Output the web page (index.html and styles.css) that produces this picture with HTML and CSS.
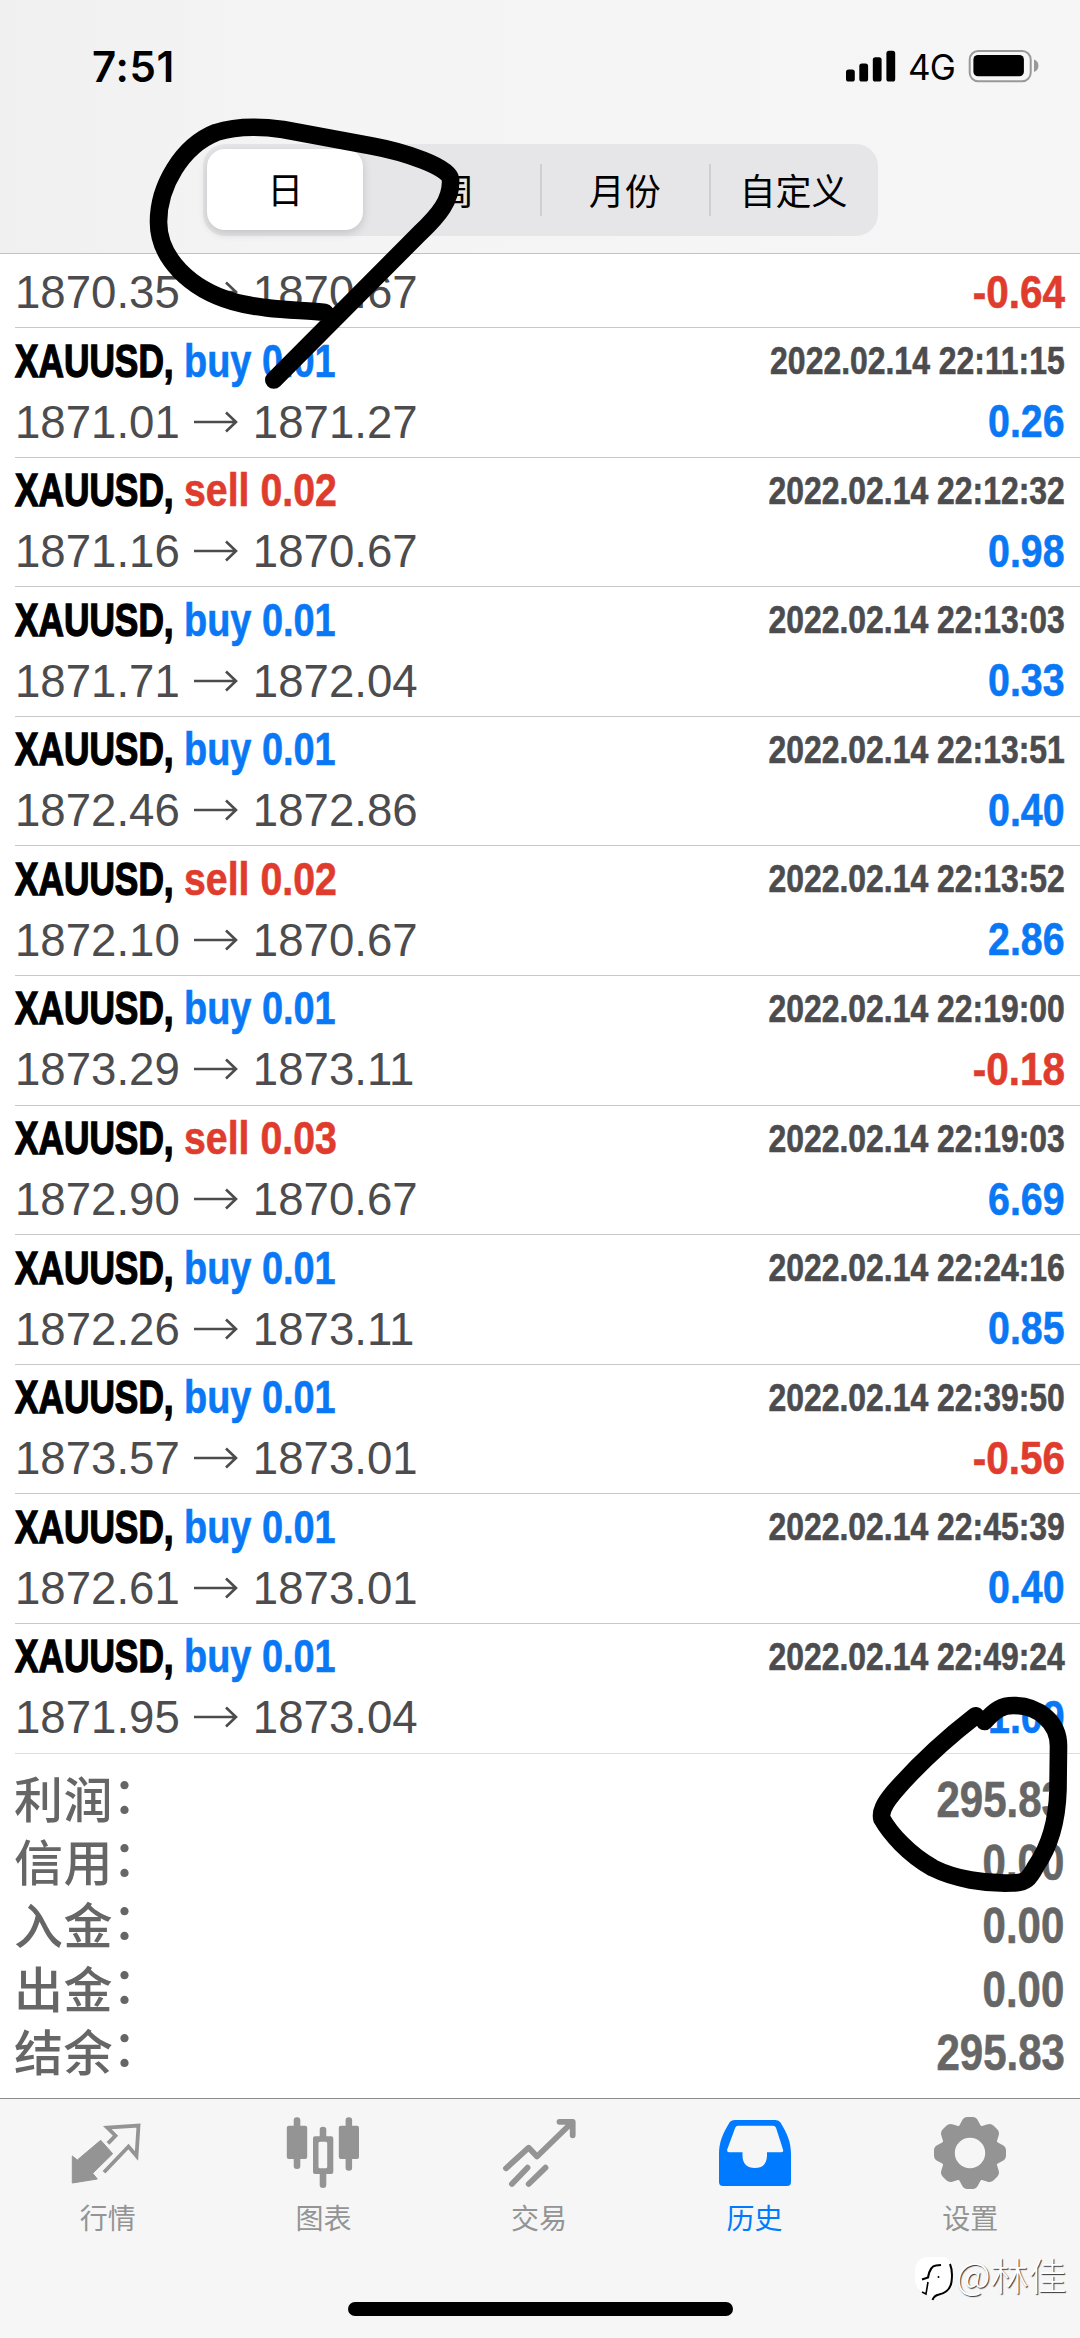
FILE: index.html
```html
<!DOCTYPE html>
<html lang="zh-CN">
<head>
<meta charset="utf-8">
<title>历史</title>
<link rel="stylesheet" href="styles.css">
</head>
<body>
<div class="screen">
  <header class="header">
    <div class="status">
      <span class="time">7:51</span>
      <div class="status-right">
        <svg class="signal" width="50" height="32" viewBox="0 0 50 32"><rect x="0" y="19.5" width="8.8" height="12" rx="2.6"/><rect x="13.3" y="13.5" width="8.8" height="18" rx="2.6"/><rect x="26.8" y="7.2" width="8.8" height="24.3" rx="2.6"/><rect x="40.4" y="0.8" width="8.8" height="30.7" rx="2.6"/></svg>
        <span class="net">4G</span>
        <svg class="battery" width="72" height="34" viewBox="0 0 72 34"><rect x="1.7" y="2" width="61" height="30.3" rx="8.5" fill="none" stroke="#999" stroke-width="2"/><rect x="5.4" y="6" width="50.5" height="21.3" rx="4.5"/><path d="M66 10.5Q70.4 12 70.4 16.7Q70.4 21.5 66 23Z" fill="#999"/></svg>
      </div>
    </div>
    <nav class="segments">
      <span class="segment active">日</span>
      <span class="segment">周</span>
      <span class="segment divided">月份</span>
      <span class="segment divided">自定义</span>
    </nav>
  </header>

  <main class="history">
    <div class="deal partial"><div class="line"><span class="price">1870.35<svg class="arrow" viewBox="0 0 46 24"><path d="M1 12H43M33 2.5L43 12L33 21.5"/></svg>1870.67</span><span class="result loss">-0.64</span></div></div>
    <div class="deal"><div class="line head"><span class="symbol">XAUUSD,</span><span class="side buy">buy 0.01</span><span class="date">2022.02.14 22:11:15</span></div><div class="line"><span class="price">1871.01<svg class="arrow" viewBox="0 0 46 24"><path d="M1 12H43M33 2.5L43 12L33 21.5"/></svg>1871.27</span><span class="result">0.26</span></div></div>
    <div class="deal"><div class="line head"><span class="symbol">XAUUSD,</span><span class="side sell">sell 0.02</span><span class="date">2022.02.14 22:12:32</span></div><div class="line"><span class="price">1871.16<svg class="arrow" viewBox="0 0 46 24"><path d="M1 12H43M33 2.5L43 12L33 21.5"/></svg>1870.67</span><span class="result">0.98</span></div></div>
    <div class="deal"><div class="line head"><span class="symbol">XAUUSD,</span><span class="side buy">buy 0.01</span><span class="date">2022.02.14 22:13:03</span></div><div class="line"><span class="price">1871.71<svg class="arrow" viewBox="0 0 46 24"><path d="M1 12H43M33 2.5L43 12L33 21.5"/></svg>1872.04</span><span class="result">0.33</span></div></div>
    <div class="deal"><div class="line head"><span class="symbol">XAUUSD,</span><span class="side buy">buy 0.01</span><span class="date">2022.02.14 22:13:51</span></div><div class="line"><span class="price">1872.46<svg class="arrow" viewBox="0 0 46 24"><path d="M1 12H43M33 2.5L43 12L33 21.5"/></svg>1872.86</span><span class="result">0.40</span></div></div>
    <div class="deal"><div class="line head"><span class="symbol">XAUUSD,</span><span class="side sell">sell 0.02</span><span class="date">2022.02.14 22:13:52</span></div><div class="line"><span class="price">1872.10<svg class="arrow" viewBox="0 0 46 24"><path d="M1 12H43M33 2.5L43 12L33 21.5"/></svg>1870.67</span><span class="result">2.86</span></div></div>
    <div class="deal"><div class="line head"><span class="symbol">XAUUSD,</span><span class="side buy">buy 0.01</span><span class="date">2022.02.14 22:19:00</span></div><div class="line"><span class="price">1873.29<svg class="arrow" viewBox="0 0 46 24"><path d="M1 12H43M33 2.5L43 12L33 21.5"/></svg>1873.11</span><span class="result loss">-0.18</span></div></div>
    <div class="deal"><div class="line head"><span class="symbol">XAUUSD,</span><span class="side sell">sell 0.03</span><span class="date">2022.02.14 22:19:03</span></div><div class="line"><span class="price">1872.90<svg class="arrow" viewBox="0 0 46 24"><path d="M1 12H43M33 2.5L43 12L33 21.5"/></svg>1870.67</span><span class="result">6.69</span></div></div>
    <div class="deal"><div class="line head"><span class="symbol">XAUUSD,</span><span class="side buy">buy 0.01</span><span class="date">2022.02.14 22:24:16</span></div><div class="line"><span class="price">1872.26<svg class="arrow" viewBox="0 0 46 24"><path d="M1 12H43M33 2.5L43 12L33 21.5"/></svg>1873.11</span><span class="result">0.85</span></div></div>
    <div class="deal"><div class="line head"><span class="symbol">XAUUSD,</span><span class="side buy">buy 0.01</span><span class="date">2022.02.14 22:39:50</span></div><div class="line"><span class="price">1873.57<svg class="arrow" viewBox="0 0 46 24"><path d="M1 12H43M33 2.5L43 12L33 21.5"/></svg>1873.01</span><span class="result loss">-0.56</span></div></div>
    <div class="deal"><div class="line head"><span class="symbol">XAUUSD,</span><span class="side buy">buy 0.01</span><span class="date">2022.02.14 22:45:39</span></div><div class="line"><span class="price">1872.61<svg class="arrow" viewBox="0 0 46 24"><path d="M1 12H43M33 2.5L43 12L33 21.5"/></svg>1873.01</span><span class="result">0.40</span></div></div>
    <div class="deal last"><div class="line head"><span class="symbol">XAUUSD,</span><span class="side buy">buy 0.01</span><span class="date">2022.02.14 22:49:24</span></div><div class="line"><span class="price">1871.95<svg class="arrow" viewBox="0 0 46 24"><path d="M1 12H43M33 2.5L43 12L33 21.5"/></svg>1873.04</span><span class="result">1.09</span></div></div>

    <dl class="summary">
      <div class="total"><dt>利润<span class="colon">：</span></dt><dd>295.83</dd></div>
      <div class="total"><dt>信用<span class="colon">：</span></dt><dd>0.00</dd></div>
      <div class="total"><dt>入金<span class="colon">：</span></dt><dd>0.00</dd></div>
      <div class="total"><dt>出金<span class="colon">：</span></dt><dd>0.00</dd></div>
      <div class="total"><dt>结余<span class="colon">：</span></dt><dd>295.83</dd></div>
    </dl>
  </main>

  <footer class="tabbar">
    <div class="tabs">
      <div class="tab">
        <svg class="icon" viewBox="1.5 0 74 76"><path d="M2.8 40L7.8 44L31.2 24.3L43.2 37.7L23.2 57.3L27.8 63L2.8 67Z" fill="currentColor" stroke="currentColor" stroke-width="1" stroke-linejoin="round"/><path d="M38.5 27.3L46 19.7L37.8 11.6L69 9.5L67 40L59 30.5L34.5 56.3" fill="none" stroke="currentColor" stroke-width="3.8"/></svg>
        <span>行情</span>
      </div>
      <div class="tab">
        <svg class="icon" viewBox="0 0 74 76" fill="currentColor"><rect x=".8" y="9.7" width="20.4" height="33.3" rx="2"/><rect x="7.7" y="1.3" width="6.6" height="51.7" rx="3"/><path fill-rule="evenodd" d="M29 20.3H45.3Q47.3 20.3 47.3 22.3V56Q47.3 58 45.3 58H29Q27 58 27 56V22.3Q27 20.3 29 20.3ZM34 25.7Q32.5 25.7 32.5 27.2V50.8Q32.5 52.3 34 52.3H39.7Q41.2 52.3 41.2 50.8V27.2Q41.2 25.7 39.7 25.7Z"/><path d="M33.7 21V13.5Q33.7 10.7 37 10.7Q40.3 10.7 40.3 13.5V21ZM33.7 57V69Q33.7 72 37 72Q40.3 72 40.3 69V57Z"/><rect x="52.8" y="9.7" width="20.2" height="33.3" rx="2"/><rect x="59.6" y="1.3" width="6.5" height="53.5" rx="3"/></svg>
        <span>图表</span>
      </div>
      <div class="tab">
        <svg class="icon" viewBox="0 0 74 76" fill="none" stroke="currentColor" stroke-width="5.8" stroke-linecap="round" stroke-linejoin="round"><path d="M4 52.3L26.7 31.7L35 40.5L70.5 6M57.5 5.8H70.7V19.3"/><path d="M9.9 68L25.5 51.7M26.7 68L43.5 51.7"/></svg>
        <span>交易</span>
      </div>
      <div class="tab current">
        <svg class="icon" viewBox="0 0 74 76" fill="currentColor"><path fill-rule="evenodd" d="M17 4H57.5Q61 4 62.5 6.5C69 17 73 26 73 38V66Q73 70 69 70H5Q1 70 1 66V38C1 26 5 17 11.5 6.5Q13 4 17 4ZM20 9.7Q18 9.7 17.2 11.7L9.2 33.5Q8.6 36.3 11 36.3H24.5V40Q25 52 36.8 52Q48.5 52 49 40V36.3H63Q66 36.3 65 33.5L58 11.7Q57.3 9.7 55 9.7Z"/></svg>
        <span>历史</span>
      </div>
      <div class="tab">
        <svg class="icon" viewBox="0 0 74 76" fill="currentColor"><defs><path id="tooth" d="M24.5 13L28.8 5Q30.5 1 34.5 1H39.5Q43.5 1 45.2 5L49.5 13Z"/></defs><circle cx="37" cy="37" r="22.2" fill="none" stroke="currentColor" stroke-width="14"/><use href="#tooth"/><use href="#tooth" transform="rotate(45 37 37)"/><use href="#tooth" transform="rotate(90 37 37)"/><use href="#tooth" transform="rotate(135 37 37)"/><use href="#tooth" transform="rotate(180 37 37)"/><use href="#tooth" transform="rotate(225 37 37)"/><use href="#tooth" transform="rotate(270 37 37)"/><use href="#tooth" transform="rotate(315 37 37)"/></svg>
        <span>设置</span>
      </div>
    </div>
    <div class="home"></div>
  </footer>

  <div class="watermark">
    <svg width="42" height="48" viewBox="0 0 42 48"><path d="M12 1H30Q38 2 39 14V25Q38 38 25 39.5Q20 40 19 44Q16 38 11 37Q2 34 1 24V14Q2 3 12 1Z" fill="#fff"/><path d="M36 8Q39 15 37.5 26Q36 36 25 38.5Q20 39.5 18.5 44" fill="none" stroke="#000" stroke-width="2"/><path d="M8 23.5L14 21.5Q16 10 22 9.5L27 9" fill="none" stroke="#000" stroke-width="2.2"/><path d="M14 26L12 38L8 36" fill="none" stroke="#000" stroke-width="1.6"/><circle cx="24.5" cy="21" r="1"/></svg>
    <span>@林佳</span>
  </div>

  <svg class="ink" viewBox="0 0 1080 2338">
    <path d="M325 312.5C305 309.5 265 311 233 301.5C190 289 158.5 258 158.5 222C158.5 186 182 146 216 132.5C236 126 262 126.5 283 129.5L372 146C405 152 449 167 450.5 179C452 200 438 216 420 233L273.8 380"/>
    <path d="M984.5 1721.5C996 1709 1002 1705.500 1013.5 1705.5C1038 1705.500 1058.5 1722 1058.5 1746L1058 1790C1057 1822 1050 1846 1036 1866C1029 1879 1026 1883 1012 1883C985 1884 955 1879 933 1868C908 1854 890 1833 882 1819C880 1812 884 1804 894 1792C920 1762 948 1737 975.6 1715.7"/>
  </svg>
</div>
</body>
</html>
```
FILE: styles.css
```css
* { box-sizing: border-box; }

body {
  margin: 0;
  background: #fff;
  font-family: "Liberation Sans", "Noto Sans CJK SC", sans-serif;
}

.screen {
  position: relative;
  display: flex;
  flex-direction: column;
  width: 1080px;
  height: 2338px;
  overflow: hidden;
  background: #fff;
}

.header {
  height: 254px;
  border-bottom: 1px solid #c2c2c4;
  background: linear-gradient(90deg, #f0f0f0, #f5f4f4 25%, #f6f6f6);
}

.status {
  display: flex;
  justify-content: space-between;
  align-items: center;
  height: 144px;
  padding: 0 40px 12px 92px;
  font-family: Inter, sans-serif;
}

.time { font-size: 42px; font-weight: 600; letter-spacing: 0.6px; }
.status-right { display: flex; align-items: center; }
.signal { margin-right: 12px; }
.net { font-size: 35px; width: 60px; letter-spacing: -0.8px; padding-top: 2px; }

.segments {
  display: grid;
  grid-template-columns: repeat(4, 1fr);
  width: 675px;
  height: 92px;
  margin: 0 auto;
  border-radius: 22px;
  background: #e6e6e8;
}

.segment {
  display: flex;
  align-items: center;
  justify-content: center;
  font: 36px/1 "Noto Sans CJK SC", sans-serif;
  padding: 0 0 3px 1px;
}

.segment.active {
  margin: 5px 8px 6px 4px;
  border-radius: 18px;
  background: #fff;
  box-shadow: 0 3px 10px rgba(0, 0, 0, .16);
}

.divided {
  background: linear-gradient(#cfcfd2, #cfcfd2) left center / 2px 52px no-repeat;
}

.history { flex: 0 0 1844px; }

.deal {
  height: 129.6px;
  margin-left: 15px;
  padding: 0 15.5px 0 0;
  border-bottom: 1px solid #c8c8ca;
}

.partial { height: 74px; padding-top: 10.5px; }
.last { border-color: #dededf; }

.line {
  display: flex;
  align-items: center;
  justify-content: space-between;
  height: 55px;
  line-height: 55px;
}

.head { height: 66px; justify-content: flex-start; }

/* Condensed bold face, made by narrowing the regular-width one */
.symbol, .side, .date, .result, .total dd {
  font-weight: 700;
  white-space: nowrap;
  transform-origin: left center;
  -webkit-text-stroke: .6px currentColor;
}

.symbol { width: 169px; font-size: 46.5px; transform: scaleX(.758); -webkit-text-stroke-width: 1.4px; }
.side { width: 150px; font-size: 46.5px; }
.date { margin-left: auto; font-size: 38px; color: #4c4c4e; transform: scaleX(.84); padding-top: 1px; }
.price { font-size: 45.6px; color: #4c4c4e; white-space: nowrap; padding-top: 1px; }
.result { font-size: 46.5px; color: #0a78f5; transform: scaleX(.845); }
.buy { color: #0a78f5; transform: scaleX(.815); }
.sell { color: #e03c2e; transform: scaleX(.845); }
.loss { color: #e03c2e; transform: scaleX(.87); }
.date, .result, .total dd { transform-origin: right center; }

.arrow {
  width: 46px;
  height: 24px;
  margin: 0 14px 0 13px;
  vertical-align: 4px;
  fill: none;
  stroke: #4c4c4e;
  stroke-width: 2.6;
}

.summary { margin: 0; padding: 15px 15.5px 0 14px; }

.total {
  display: flex;
  justify-content: space-between;
  height: 63.4px;
  line-height: 63.4px;
  color: #666;
}

.total dt {
  display: flex;
  margin-top: -4px;
  font: 500 49px/63.4px "Noto Sans CJK SC", sans-serif;
  letter-spacing: 0.6px;
}

.colon { margin: -5px 0 5px -1px; }

.total dd { margin: 0; font-size: 50px; transform: scaleX(.84); }

.tabbar {
  flex: 1;
  border-top: 1px solid #8c8c8c;
  background: #f6f6f6;
}

.tabs {
  display: grid;
  grid-template-columns: repeat(5, 1fr);
  height: 203px;
  padding: 17px 2px 0 0;
}

.tab {
  display: flex;
  flex-direction: column;
  align-items: center;
  color: #949494;
  font: 28px/34px "Noto Sans CJK SC", sans-serif;
}

.tab span { margin-top: 8px; }
.current { color: #007aff; }
.icon { width: 74px; height: 76px; }

.home {
  width: 385px;
  height: 14px;
  margin: 0 auto;
  border-radius: 7px;
  background: #000;
}

.watermark {
  position: absolute;
  left: 914px;
  top: 2256px;
  display: flex;
  font: 300 38px/36px "Noto Sans CJK SC", sans-serif;
  color: #fff;
  text-shadow: 1px 1px 1px #333;
}

.ink {
  position: absolute;
  inset: 0;
  fill: none;
  stroke: #000;
  stroke-width: 17.6;
  stroke-linecap: round;
  stroke-linejoin: round;
  pointer-events: none;
}
```
